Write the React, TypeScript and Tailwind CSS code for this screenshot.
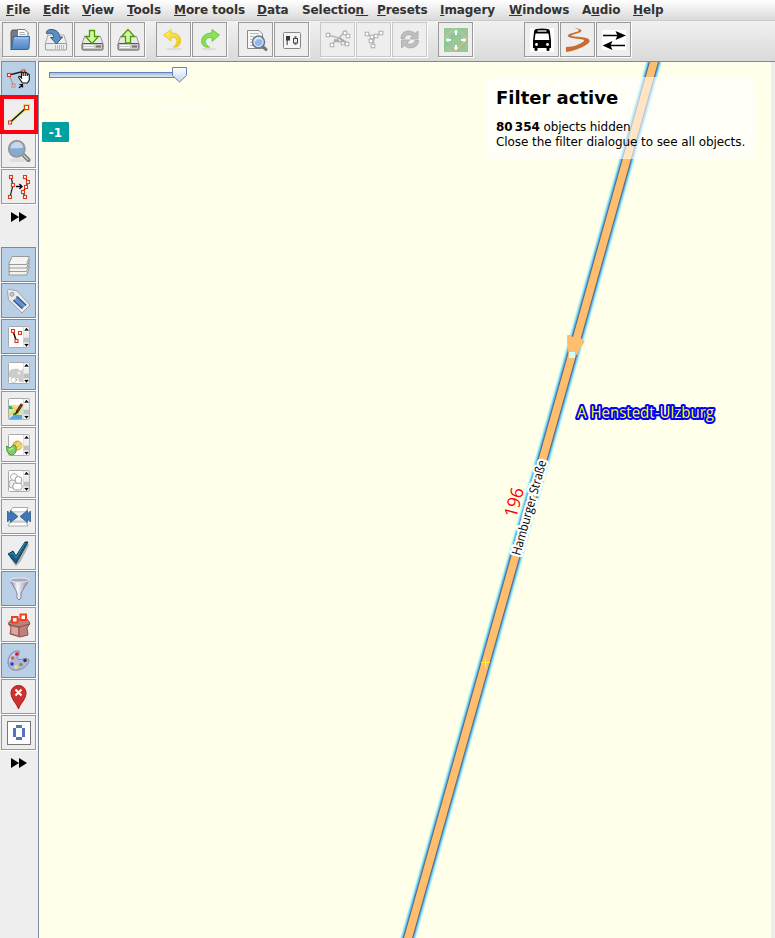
import type { ReactNode } from "react";

type IconProps = { children: ReactNode };

function Icon({ children }: IconProps) {
  return (
    <svg viewBox="0 0 35 35" className="block h-[35px] w-[35px] shrink-0" fill="none">
      {children}
    </svg>
  );
}

function Node({ x, y, s = 3, c = "#e03818" }: { x: number; y: number; s?: number; c?: string }) {
  return <rect x={x - s / 2} y={y - s / 2} width={s} height={s} fill="#fff" stroke={c} strokeWidth="1.1" />;
}

const FolderIcon = (
  <Icon>
    <path d="M9 10 L10 8 H16 V26 H9Z" fill="#777b80" stroke="#55585c" />
    <path d="M15.5 7.5 H23 L26 10.5 V17 H15.5Z" fill="#fafafa" stroke="#777" />
    <path d="M17.5 10.5h5M17.5 12.5h6" stroke="#aaa" />
    <path d="M11.5 14.5 H27.5 L27 26 Q26.8 27.5 25 27.5 H8.5 L10 25Z" fill="url(#folder)" stroke="#3465a4" />
    <path d="M12.5 16 H26.5" stroke="#a9cdf0" />
  </Icon>
);

function Drive() {
  return (
    <>
      <path d="M10.5 14.5 H26.5 L29 22 H8Z" fill="#e9e9e9" stroke="#999" />
      <rect x="8" y="21.5" width="21" height="6.5" rx="1.2" fill="#c9c9c9" stroke="#555" />
      <path d="M10 23.5h10M10 25.5h10" stroke="#fafafa" />
      <path d="M22 24.5h5" stroke="#777" strokeWidth="2" />
    </>
  );
}

const OpenIcon = (
  <Icon>
    <path d="M10 13 H26 L29 23 H7Z" fill="#eee" stroke="#aaa" />
    <rect x="7.5" y="21.5" width="21" height="6.5" rx="1" fill="#ededed" stroke="#999" />
    <path d="M17.5 23v4M19.5 23v4M21.5 23v4M23.5 23v4M25.5 23v4" stroke="#aaa" strokeWidth=".8" />
    <path d="M9 12 C7 10 10 7 14 7.5 C19 8 21.5 11 21.5 15 H24.5 L18.5 22 L12.5 15.5 H15.5 C16 12 13 10 9 12Z" fill="#5b8fc0" stroke="#285b88" />
  </Icon>
);

const DownloadIcon = (
  <Icon>
    <Drive />
    <path d="M15.5 8.5 H20.5 V14.5 H24.5 L18 21.5 L11.5 14.5 H15.5Z" fill="#d0f7a5" stroke="#4e9a06" strokeWidth="1.3" />
  </Icon>
);

const UploadIcon = (
  <Icon>
    <Drive />
    <path d="M15.5 21 H20.5 V14.5 H24.5 L18 7.5 L11.5 14.5 H15.5Z" fill="#d0f7a5" stroke="#4e9a06" strokeWidth="1.3" />
  </Icon>
);

const UndoIcon = (
  <Icon>
    <ellipse cx="18" cy="27" rx="8" ry="1.5" fill="#ddd" />
    <path d="M15 7.5 L7.5 13 L15 19 V15.5 C20 15 22 18 20.5 21 C19.7 23 18.5 24 17.5 25 C23 26 25.5 21 24.5 17 C23.5 12.5 19.5 11 15 11Z" fill="url(#yellow)" stroke="#e6c415" strokeWidth=".8" />
  </Icon>
);

const RedoIcon = (
  <Icon>
    <ellipse cx="17" cy="27" rx="8" ry="1.5" fill="#ddd" />
    <path d="M20 7.5 L27.5 13 L20 19.5 V15.5 C15 15 12 18 13.5 21 C14.5 23 16 24.5 17.5 25 C11.5 26 9 22 9.7 18 C10.5 13 15 11 20 11Z" fill="url(#green)" stroke="#64bd38" strokeWidth=".8" />
  </Icon>
);

const SearchIcon = (
  <Icon>
    <path d="M9.5 8.5 H21 L24.5 12 V26.5 H9.5Z" fill="#f8f8f8" stroke="#888" />
    <path d="M12 11.5h9M12 14.5h4M12 17.5h2M12 20.5h2M12 23.5h3" stroke="#bbb" />
    <path d="M24.5 24.5 L28 27.5" stroke="#777" strokeWidth="3" strokeLinecap="round" />
    <circle cx="20.5" cy="20" r="6" fill="#91b7ea" stroke="#6f7882" strokeWidth="1.6" />
    <circle cx="20.5" cy="20" r="4.5" stroke="#e3efff" />
    <path d="M17 19c1-3 4-4 6-2" stroke="#d5e8ff" strokeWidth="2" />
  </Icon>
);

const PreferencesIcon = (
  <Icon>
    <rect x="9.5" y="10.5" width="17" height="16" rx="1" fill="#f5f5f5" stroke="#888" />
    <path d="M13.5 14v9M21.5 14v9" stroke="#777" strokeWidth="2" />
    <path d="M14.5 18v5" stroke="#fff" />
    <rect x="12" y="14" width="4" height="4.5" fill="#34393b" />
    <rect x="19.500" y="16.500" width="4" height="4.500" fill="#eee" stroke="#444" />
  </Icon>
);

const SplitIcon = (
  <Icon>
    <path d="M8 13 L19 16 L28 21 M11 23 L19 16 L25 9 L27 14 M14 19 L26 21" stroke="#b8b8b8" strokeWidth="1.6" />
    {[[8, 13], [12, 23], [25, 11], [28, 14], [23, 21], [27, 22]].map(([x, y]) => (
      <Node key={`${x}-${y}`} x={x} y={y} s={3.5} c="#b2b2b2" />
    ))}
    <path d="M14 18l5 1M20 16l4 4" stroke="#aaa" strokeWidth="2.2" />
  </Icon>
);

const CombineIcon = (
  <Icon>
    <path d="M11 12 L18 16 L24 11 M18 16 L17 24" stroke="#b8b8b8" strokeWidth="1.5" />
    {[[11, 12], [16, 15], [20, 14], [25, 11], [15, 19], [17, 24]].map(([x, y]) => (
      <Node key={`${x}-${y}`} x={x} y={y} s={3.5} c="#b2b2b2" />
    ))}
  </Icon>
);

const RefreshIcon = (
  <Icon>
    <path d="M9 16.500 C9 8.500 18 7 23 11.500 L26 9 V17 H18 L20.500 14 C17 11.500 13.500 13 12.500 16.500Z" fill="#bfbfbf" stroke="#b0b0b0" />
    <path d="M26.500 18.500 C26.500 26 17 28 12.500 23.500 L9.500 26 V18 H17.500 L15 21 C18.500 23.500 22 22 23 18.500Z" fill="#bfbfbf" stroke="#b0b0b0" />
  </Icon>
);

const OffsetIcon = (
  <Icon>
    <rect x="6" y="6" width="24" height="24" fill="#9bc69a" />
    <path d="M6 20 L20 6 H26 L6 27Z" fill="#8ac796" />
    <path d="M12 30 L30 12 V20 L21 30Z" fill="#a9bd8f" />
    <path d="M6 17 L16 6M15 30 L30 16M8 25l6 5M20 7l9 9" stroke="#b7d1a6" />
    <path d="M18 9v4M18 23v4M9 18h4M23 18h4" stroke="#fff" strokeWidth="2" />
    <path d="M15.500 10.500L18 7.500L20.500 10.500ZM15.500 25.500L18 28.500L20.500 25.500ZM10.500 15.500L7.500 18L10.500 20.500ZM25.500 15.500L28.500 18L25.500 20.500Z" fill="#fff" />
  </Icon>
);

const BusIcon = (
  <Icon>
    <rect x="6" y="6" width="24" height="24" fill="#fff" />
    <path d="M12 7 Q18 6 24 7 Q26 7.500 26 10 L27 19 V26 H25.500 V28 Q25.500 29 24 29 Q22.500 29 22.500 28 V26 H13.500 V28 Q13.500 29 12 29 Q10.500 29 10.500 28 V26 H9 V19 L10 10 Q10 7.500 12 7Z" fill="#000" />
    <path d="M13.500 9h9" stroke="#fff" strokeWidth="1.300" />
    <path d="M11.500 11.500h13l.8 6.500H10.700Z" fill="#fff" />
    <circle cx="12.500" cy="22.500" r="1.400" fill="#fff" />
    <circle cx="23.500" cy="22.500" r="1.400" fill="#fff" />
  </Icon>
);

const RoadIcon = (
  <Icon>
    <path d="M14 6.500 C21 6 24 9 19 10.800 L12 13 C10 14 13 14.500 18 14.800 C30 15.500 33 19 26 23 C21 26 14 29 6 30 V25 C14 25 20 22 23.500 19.500 C26 17.500 21 17 15 16.500 C7 15.500 6 13.500 10 11.800 L17 9.700 C21 8.300 18 7 14 6.500Z" fill="#c86d32" />
  </Icon>
);

const SwapIcon = (
  <Icon>
    <rect x="6" y="8" width="24" height="20" fill="#fff" />
    <path d="M7 13.500h19M11 23.500h18" stroke="#000" strokeWidth="1.500" />
    <path d="M19.500 9 L30 13.500 L19.500 18 L21.500 13.500ZM16.500 19 L6.500 23.500 L16.500 28 L14.500 23.500Z" fill="#000" />
  </Icon>
);

const SelectIcon = (
  <Icon>
    <path d="M8 14 L22 10.500" stroke="#222" strokeWidth="1.300" />
    <path d="M8 14 L12.500 24.500" stroke="#8a98a5" />
    <Node x={8} y={14} />
    <Node x={22.500} y={10.500} />
    <g opacity=".45"><Node x={12.500} y={24.500} /></g>
    <path d="M18 17 Q17 15 19 15.500 L20.500 17 V12 Q21.200 10.500 22.200 12 V15 V11.500 Q23.500 10 24.200 12 V15 V12 Q25.500 11 26.200 12.500 V15 V13.500 Q28 12.500 28.300 14 V19 L26.500 22 H21.500Z" fill="#fff" stroke="#111" strokeWidth="1.100" />
    <path d="M18 27 L21 24M18.500 23.500H21.500V26.500" stroke="#111" strokeWidth="1.200" />
  </Icon>
);

const DrawIcon = (
  <Icon>
    <path d="M9 25.500 L25.500 10.500" stroke="#f5ed95" strokeWidth="4.500" />
    <rect x="22" y="7" width="7" height="7" fill="#ede36a" />
    <path d="M9 25.500 L25.500 10.500" stroke="#08183c" strokeWidth="1.600" />
    <Node x={9} y={25.500} />
    <Node x={25.500} y={10.500} s={4} />
  </Icon>
);

const ZoomIcon = (
  <Icon>
    <ellipse cx="17" cy="27" rx="9" ry="2" fill="#dedede" />
    <path d="M22.500 22 L27.500 27" stroke="#777" strokeWidth="4" strokeLinecap="round" />
    <path d="M22.500 22 L27.500 27" stroke="#c8c8c8" strokeWidth="1.500" />
    <circle cx="15.800" cy="15.800" r="8" fill="#84abd4" stroke="#999" strokeWidth="2" />
    <path d="M9.500 15.500 C10 7 21.500 7 22.200 15Z" fill="#c4d9ed" />
  </Icon>
);

const ImproveIcon = (
  <Icon>
    <path d="M10 8 L12 16 L9 28M24 8L27 13L25 18L22 23L24 28" stroke="#222" strokeWidth="1.200" />
    <path d="M15 17.500h5M18.500 15 L21 17.500L18.500 20" stroke="#000" strokeWidth="1.300" />
    {[[10, 8], [12, 16], [9, 28], [24, 8], [27, 13], [25, 18], [22, 23], [24, 28]].map(([x, y]) => (
      <Node key={`${x}-${y}`} x={x} y={y} />
    ))}
  </Icon>
);

const LayersIcon = (
  <Icon>
    {[11.5, 8, 4.5, 1].map((d) => (
      <path key={d} d={`M11 ${8.500 + d} H28.500 L25.500 ${16.500 + d} H7.500Z`} fill="#f3f3f1" stroke="#999" />
    ))}
  </Icon>
);

const TagIcon = (
  <Icon>
    <path d="M6.500 7.500 Q7 6 9 6.500 L16 8 L29 22 L21 30 L7.500 16.500Z" fill="#eee" stroke="#a1a1a1" />
    <circle cx="11" cy="11.300" r="2" fill="#b8cfe5" stroke="#999" />
    <path d="M15.500 13.500 L25 22.500M12.500 17 L21.500 25.500" stroke="#3465a4" strokeWidth="2.200" />
    <path d="M14.500 15.500 L23 24" stroke="#5b8cc2" strokeWidth="2" />
  </Icon>
);

function PanelIcon({ children }: IconProps) {
  return (
    <Icon>
      <rect x="7.500" y="7.500" width="21" height="21" rx="1" fill="#fff" stroke="#aaa" />
      {children}
      <rect x="22.500" y="8" width="5.500" height="20" fill="#fff" stroke="#ccc" strokeWidth=".6" />
      <path d="M23 13h5v5h-5z" fill="#eee" />
      <path d="M22.500 18.500h5.500v5h-5.500z" fill="#c1c1c1" />
      <path d="M23.500 11.500h4L25.500 9ZM23.500 25h4L25.500 27.500Z" fill="#000" stroke="#000" strokeWidth=".3" />
    </Icon>
  );
}

const SelectionPanel = (
  <PanelIcon>
    <path d="M12 12L15 21" stroke="#111" strokeWidth="1.500" />
    <Node x={12} y={12} /><Node x={19} y={14} /><Node x={15.500} y={22} />
  </PanelIcon>
);
const RelationsPanel = (
  <PanelIcon>
    <path d="M8 17 Q9 14 13 14 Q15 13 17 14 L20 16 22 13 V27 H18 L17 23 L11 23 L8 22Z" fill="#ccc" />
    <path d="M13 27l3-3" stroke="#aaa" strokeWidth="2" />
    <circle cx="12.500" cy="25" r="2.500" fill="#fff" stroke="#ccc" />
    <circle cx="18" cy="18" r="1.500" fill="#eee" />
  </PanelIcon>
);
const PaintPanel = (
  <PanelIcon>
    <rect x="8" y="14" width="14" height="14" fill="#c9e8cc" />
    <path d="M8 15h4v3H8zM12 22h4v4h-4z" fill="#22b65b" />
    <path d="M8 24L21 14M11 14l9 14" stroke="#f5d85a" strokeWidth="2.500" />
    <path d="M8 28l5-4h8v4z" fill="#5da3e5" />
    <path d="M21 13L16 21" stroke="#7b2f0c" strokeWidth="3" />
    <path d="M16 19l-3 5 4-2z" fill="#221" />
  </PanelIcon>
);
const ChangesetPanel = (
  <PanelIcon>
    <circle cx="16.500" cy="18.500" r="4.500" fill="#e8c34d" stroke="#c99c22" />
    <path d="M14 20l5-5M17 22l4-4" stroke="#f6dc7c" strokeWidth="2" />
    <path d="M5.500 19L9 21L12 18L15 19V25L12 28L8 27L6 24Z" fill="#83cf67" stroke="#4e9b37" />
    <path d="M8 23l4-2" stroke="#c2efb2" strokeWidth="1.200" />
  </PanelIcon>
);
const UsersPanel = (
  <PanelIcon>
    <rect x="8" y="17" width="9" height="8" rx="3" fill="#eee" stroke="#aaa" />
    <circle cx="13" cy="14" r="3.500" fill="#fff" stroke="#aaa" />
    <rect x="12" y="20" width="9" height="7" rx="2.500" fill="#fff" stroke="#999" />
    <circle cx="17.500" cy="17" r="3.500" fill="#fff" stroke="#999" />
  </PanelIcon>
);

const ConflictIcon = (
  <Icon>
    <path d="M11.500 8.500H27L25 13H9ZM9 23H25L27 27H7Z" fill="#fff" stroke="#aaa" />
    <rect x="9" y="13" width="17" height="9" fill="#eee" stroke="#ccc" />
    <path d="M6.500 12L9.500 15V11.500L17 17.500L9.500 23.500V20L6.500 23ZM29.500 12L26.500 15V11.500L19 17.500L26.500 23.500V20L29.500 23Z" fill="#3f76b5" stroke="#285c94" strokeWidth=".8" />
  </Icon>
);
const CheckIcon = (
  <Icon>
    <path d="M10 22 L15 29 L18 26 L27 9" stroke="#888" strokeWidth="3" opacity=".6" />
    <path d="M7 19 L12 16 L15 21 L24 7 L27 7 L15 28.500Z" fill="#155f82" stroke="#0d3a51" />
    <path d="M8.500 19 L12 18 L15 23 L24 8" stroke="#3497b9" />
  </Icon>
);
const FilterIcon = (
  <Icon>
    <path d="M9 9 C11 13 15 19 16 22 V27 L18 29 L20 27 V22 C21 19 26 13 28 9Z" fill="url(#funnel)" stroke="#707085" strokeWidth=".8" />
    <ellipse cx="18.500" cy="9" rx="9.500" ry="2.200" fill="#a9a9bb" stroke="#e4e4ed" strokeWidth="1.200" />
  </Icon>
);
const BasketIcon = (
  <Icon>
    <path d="M7.500 16L11 12H26L29 16L26 21L27 28L19 30L9 27L10 21Z" fill="#bb827c" stroke="#92504b" />
    <path d="M7 17l11 3 11-3M18 20v9" stroke="#884842" />
    <path d="M10.500 20L17 21V28L10.500 26Z" fill="#dba8a1" />
    <rect x="11" y="10" width="5.500" height="5.500" fill="#fff" stroke="#ef4023" strokeWidth="2" />
    <rect x="19.500" y="7.500" width="5.500" height="5.500" fill="#fff" stroke="#ef4023" strokeWidth="2" />
  </Icon>
);
const PaletteIcon = (
  <Icon>
    <path d="M18 8 C12 7 7 13 7 19 C7 25 11 28 17 27 C22 26 28 22 28 17 L25 15 C20 17 17 17 16 15 C16 13 19 13 18 8Z" fill="#b6b7d8" stroke="#8586ad" />
    <path d="M8.500 18C10 13 13 11 16 9.500" stroke="#d8d9ed" strokeWidth="1.500" />
    {[[15.800, 11, "#d71b26"], [11.500, 15, "#cc6b32"], [11, 21, "#2341cf"], [15, 24, "#eee95a"], [20, 21.500, "#5aac30"], [24, 17.500, "#343849"]].map(([x, y, c]) => (
      <circle key={`${x}`} cx={x} cy={y} r="1.800" fill={String(c)} />
    ))}
  </Icon>
);
const MarkerIcon = (
  <Icon>
    <path d="M17.500 30 C16 25 10 20 10 14 C10 4 25 4 25 14 C25 20 19 25 17.500 30Z" fill="#cf3131" stroke="#a51f1f" />
    <path d="M14.500 10.500l6 6M20.500 10.500l-6 6" stroke="#fff" strokeWidth="2" />
  </Icon>
);
const ZeroIcon = (
  <Icon>
    <rect x="6.500" y="6.500" width="23" height="23" fill="#fff" stroke="#777" />
    <path d="M15 11.500h6M15 23.500h6M13.500 13v9M22.500 13v9" stroke="#5873bd" strokeWidth="3" />
    <path d="M15 13h6v9h-6z" fill="#fff" />
  </Icon>
);

function ToolButton({ icon, disabled = false }: { icon: ReactNode; disabled?: boolean }) {
  return (
    <button className={`flex h-[35px] w-[35px] shrink-0 items-center justify-center overflow-hidden border bg-[#eee] shadow-[1px_1px_0_#fff] ${disabled ? "border-[#c8c8c8]" : "border-[#999]"}`}>
      {icon}
    </button>
  );
}

function SideButton({ icon, selected = false }: { icon: ReactNode; selected?: boolean }) {
  return (
    <button className={`flex h-[35px] w-[35px] shrink-0 items-center justify-center overflow-hidden border shadow-[1px_1px_0_#fff] ${selected ? "border-[#7a8a99] bg-[#b8cfe5]" : "border-[#999] bg-[#eee]"}`}>
      {icon}
    </button>
  );
}

function MoreArrows() {
  return (
    <svg className="block h-[10px] w-[16px]" viewBox="0 0 16 10">
      <path d="M0 0L8 5L0 10ZM8 0L16 5L8 10Z" fill="#000" />
    </svg>
  );
}

const menus = [
  { pre: "", key: "F", post: "ile", width: "w-[37px]" },
  { pre: "", key: "E", post: "dit", width: "w-[39px]" },
  { pre: "", key: "V", post: "iew", width: "w-[45px]" },
  { pre: "", key: "T", post: "ools", width: "w-[47px]" },
  { pre: "", key: "M", post: "ore tools", width: "w-[83px]" },
  { pre: "", key: "D", post: "ata", width: "w-[45px]" },
  { pre: "Selectio", key: "n ", post: "", width: "w-[75px]" },
  { pre: "", key: "P", post: "resets", width: "w-[63px]" },
  { pre: "", key: "I", post: "magery", width: "w-[69px]" },
  { pre: "", key: "W", post: "indows", width: "w-[73px]" },
  { pre: "A", key: "u", post: "dio", width: "w-[51px]" },
  { pre: "", key: "H", post: "elp", width: "w-[40px]" },
];

const toolGroups = [
  { icons: [FolderIcon, OpenIcon, DownloadIcon, UploadIcon], disabled: false, gap: "mr-[11px]" },
  { icons: [UndoIcon, RedoIcon], disabled: false, gap: "mr-[11px]" },
  { icons: [SearchIcon, PreferencesIcon], disabled: false, gap: "mr-[11px]" },
  { icons: [SplitIcon, CombineIcon, RefreshIcon], disabled: true, gap: "mr-[11px]" },
  { icons: [OffsetIcon], disabled: false, gap: "mr-[51px]" },
  { icons: [BusIcon, RoadIcon, SwapIcon], disabled: false, gap: "" },
];

const panels = [
  { icon: LayersIcon, selected: true },
  { icon: TagIcon, selected: true },
  { icon: SelectionPanel, selected: true },
  { icon: RelationsPanel, selected: true },
  { icon: PaintPanel, selected: false },
  { icon: ChangesetPanel, selected: false },
  { icon: UsersPanel, selected: false },
  { icon: ConflictIcon, selected: false },
  { icon: CheckIcon, selected: false },
  { icon: FilterIcon, selected: true },
  { icon: BasketIcon, selected: false },
  { icon: PaletteIcon, selected: true },
  { icon: MarkerIcon, selected: false },
  { icon: ZeroIcon, selected: false },
];

const roadPath = "M654.800 59 L572 355 L407.500 940";

function MapCanvas() {
  return (
    <svg className="block h-[876px] w-[731px]" viewBox="39 62 731 876" fill="none">
      <path d={roadPath} stroke="#d4ffee" strokeWidth="16" />
      <path d={roadPath} stroke="#a4f0f2" strokeWidth="14.400" />
      <path d={roadPath} stroke="#7cc8f4" strokeWidth="12.600" />
      <path d={roadPath} stroke="#5599de" strokeWidth="10.800" />
      <path d={roadPath} stroke="#5c646c" strokeWidth="9.400" />
      <path d={roadPath} stroke="#fdbf6f" strokeWidth="7.800" />
      <path d="M567.500 335 Q569 334 574 338 Q580 336 584.500 341 Q585 343 582 345 L577 355 H569 Q567 347 567 336Z" fill="#fdbf6f" />
      <rect x="569" y="352" width="6" height="6" fill="#ccffff" />
      <path d="M481 662.500h9M485.500 658v9" stroke="#ffff00" />
      <text x="577" y="418" textLength="137" lengthAdjust="spacingAndGlyphs" className="font-['Open_Sans',sans-serif] text-[15.500px]" fill="#ffff00" stroke="#0000ff" strokeWidth="4" strokeLinejoin="round" paintOrder="stroke">A Henstedt-Ulzburg</text>
      <text transform="translate(520 556) rotate(-74.300)" textLength="98" lengthAdjust="spacingAndGlyphs" className="font-['Open_Sans',sans-serif] text-[12.500px]" fill="#000" stroke="#fff" strokeWidth="5" strokeLinejoin="round" paintOrder="stroke">Hamburger Straße</text>
      <text transform="translate(516 518.500) rotate(-74.300)" textLength="30" lengthAdjust="spacingAndGlyphs" className="font-['Open_Sans',sans-serif] text-[18px]" fill="#ff0000">196</text>
    </svg>
  );
}

function LevelSlider() {
  return (
    <svg className="absolute left-0 top-0 h-[54px] w-[180px]" viewBox="39 62 180 54" fill="none">
      <rect x="49.500" y="72.500" width="130" height="5" fill="url(#track)" stroke="#6382bf" />
      <path d="M172.500 67.500H186.500V75.500L179.500 82L172.500 75.500Z" fill="url(#thumb)" stroke="#6382bf" />
      <path d="M47 94.500H184M47.500 90v10M69.500 92v4M92.500 90v10M115.500 92v4M137.500 90v10M160.500 92v4M183.500 90v10" stroke="#fffff8" />
      <text x="43.500" y="112" className="font-['DejaVu_Sans',sans-serif] text-[12px]" fill="#fffff8">0</text>
      <text x="161" y="112" className="font-['DejaVu_Sans',sans-serif] text-[12px]" fill="#fffff8">9.00 m</text>
    </svg>
  );
}

export default function App() {
  return (
    <div className="flex h-[938px] w-[775px] flex-col overflow-hidden bg-[#eee] font-['DejaVu_Sans',sans-serif] text-[12px] text-black">
      <svg className="absolute h-0 w-0">
        <defs>
          <linearGradient id="folder" x2="0" y2="1"><stop stopColor="#8cb7e3" /><stop offset="1" stopColor="#4f83c2" /></linearGradient>
          <linearGradient id="yellow" x2="1" y2="1"><stop stopColor="#fff06a" /><stop offset="1" stopColor="#edc816" /></linearGradient>
          <linearGradient id="green" x2="1" y2="1"><stop stopColor="#7bdc61" /><stop offset="1" stopColor="#98e642" /></linearGradient>
          <linearGradient id="funnel"><stop stopColor="#85859c" /><stop offset=".4" stopColor="#f7f7ff" /><stop offset="1" stopColor="#858599" /></linearGradient>
          <linearGradient id="track" x2="0" y2="1"><stop stopColor="#a3b8cc" /><stop offset="1" stopColor="#e4f0fc" /></linearGradient>
          <linearGradient id="thumb" x2="0" y2="1"><stop stopColor="#fff" /><stop offset="1" stopColor="#c3d6ed" /></linearGradient>
        </defs>
      </svg>

      <nav className="flex h-[21px] shrink-0 items-start border-b border-[#ccc] bg-linear-to-b from-white to-[#dadada] pl-[6px] pt-[3px] font-bold leading-[14px] tracking-[-0.08px] text-[#333]">
        {menus.map((m) => (
          <span key={m.pre + m.key + m.post} className={`${m.width} shrink-0 whitespace-pre`}>
            {m.pre}
            <span className="underline decoration-1 underline-offset-1 [text-decoration-skip-ink:none]">{m.key}</span>
            {m.post}
          </span>
        ))}
      </nav>

      <header className="flex h-[41px] shrink-0 items-start border-b border-[#7a8a99] bg-linear-to-b from-[#f1f1f1] to-[#dadada] pl-[2px] pt-[1px]">
        {toolGroups.map((g, i) => (
          <div key={i} className={`flex gap-px ${g.gap}`}>
            {g.icons.map((icon, j) => <ToolButton key={j} icon={icon} disabled={g.disabled} />)}
          </div>
        ))}
      </header>

      <main className="flex min-h-0 flex-1">
        <aside className="relative -mt-px flex w-[39px] shrink-0 flex-col gap-px border-r border-[#7a8a99] bg-[#eee] pl-px">
          <SideButton icon={SelectIcon} selected />
          <SideButton icon={DrawIcon} />
          <SideButton icon={ZoomIcon} />
          <SideButton icon={ImproveIcon} />
          <div className="flex h-[41px] shrink-0 items-start pl-[10px] pt-[7px]"><MoreArrows /></div>
          {panels.map((p, i) => <SideButton key={i} icon={p.icon} selected={p.selected} />)}
          <div className="flex shrink-0 pl-[10px] pt-[7px]"><MoreArrows /></div>
          <div className="absolute left-0 top-[34px] h-[39px] w-[38px] border-4 border-[#ff0010]" />
        </aside>

        <section className="relative w-[732px] shrink-0 overflow-hidden bg-[#ffffea]">
          <MapCanvas />
          <LevelSlider />
          <div className="absolute left-[3px] top-[60px] flex h-[20px] w-[27px] items-center justify-center rounded-[1px] bg-[#00a0a0] pt-px font-bold text-white">-1</div>
          <div className="absolute left-[447px] top-[15px] h-[82px] w-[269px] rounded-[6px] bg-white/60 pl-[10px] pt-[9px]">
            <h1 className="whitespace-nowrap text-[18px] font-bold leading-[24px]">Filter active</h1>
            <p className="mt-[10px] whitespace-nowrap leading-[15px] tracking-[-0.08px]"><b>80&#8201;354</b> objects hidden</p>
            <p className="whitespace-nowrap leading-[15px] tracking-[-0.08px]">Close the filter dialogue to see all objects.</p>
          </div>
        </section>
      </main>
    </div>
  );
}
